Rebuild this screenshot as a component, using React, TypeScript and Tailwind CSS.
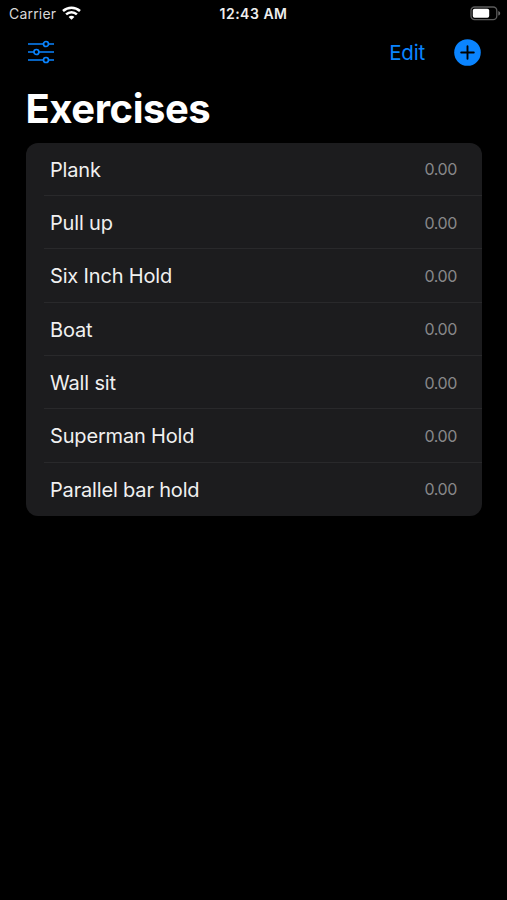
const exercises = [
  { name: 'Plank', value: '0.00' },
  { name: 'Pull up', value: '0.00' },
  { name: 'Six Inch Hold', value: '0.00' },
  { name: 'Boat', value: '0.00' },
  { name: 'Wall sit', value: '0.00' },
  { name: 'Superman Hold', value: '0.00' },
  { name: 'Parallel bar hold', value: '0.00' },
];

function WifiIcon() {
  return (
    <svg className="mb-[2px]" width="19" height="14" viewBox="0 0 19 14" fill="none" stroke="#fff" strokeWidth="2.5">
      <path d="M1 5C5.8 .6 13.2 .6 18 5" />
      <path d="M4.1 8.4C7.2 5.4 11.8 5.4 14.9 8.4" />
      <path d="M9.5 13.8L6.6 10.9C8.2 9.4 10.8 9.4 12.4 10.9Z" fill="#fff" stroke="none" />
    </svg>
  );
}

function BatteryIcon() {
  return (
    <svg width="31" height="15" viewBox="0 0 31 15" fill="none">
      <rect x="1" y="1" width="25.8" height="12.6" rx="3.6" stroke="#5c5c5c" strokeWidth="1.3" />
      <rect x="2.8" y="2.8" width="16.4" height="9" rx="1.8" fill="#fff" />
      <path d="M28.3 5C30.8 5.9 30.8 8.7 28.3 9.6Z" fill="#6c6c6c" />
    </svg>
  );
}

function SlidersIcon() {
  return (
    <svg width="28" height="24" viewBox="0 0 28 24" fill="none" stroke="#0a84ff" strokeWidth="1.7">
      <path d="M1 4H16.4M21.6 4H27M1 12H6.8M12 12H27M1 20H16.4M21.6 20H27" />
      <circle cx="19" cy="4" r="2.5" />
      <circle cx="9.4" cy="12" r="2.5" />
      <circle cx="19" cy="20" r="2.5" />
    </svg>
  );
}

function AddIcon() {
  return (
    <svg width="27" height="27" viewBox="0 0 27 27">
      <circle cx="13.5" cy="13.5" r="13.3" fill="#0a84ff" />
      <path d="M7.2 13.5H19.8M13.5 7.2V19.8" stroke="#000" strokeWidth="1.9" strokeLinecap="round" />
    </svg>
  );
}

export default function App() {
  return (
    <div className="h-[900px] w-[507px] overflow-hidden bg-black font-['Inter','Liberation_Sans',sans-serif] text-white">
      <header className="grid h-7 grid-cols-3 items-center pr-[6px] pl-[9px] text-[14px]">
        <div className="flex items-center gap-[5.5px]">
          <span className="pb-[2px] tracking-[0.2px] text-[#d8d8d8]">Carrier</span>
          <WifiIcon />
        </div>
        <span className="pr-[3px] pb-[2px] text-center font-semibold tracking-[0.5px] whitespace-nowrap text-[#eeeeee]">12:43 AM</span>
        <div className="flex justify-end pb-[2px]">
          <BatteryIcon />
        </div>
      </header>
      <nav className="flex h-12 items-center justify-between pr-[26px] pl-[27px]">
        <button aria-label="Filters">
          <SlidersIcon />
        </button>
        <div className="flex items-center gap-[29px]">
          <button className="pt-[2px] text-[20.5px] tracking-[-0.2px] text-[#0a84ff]">Edit</button>
          <button aria-label="Add exercise">
            <AddIcon />
          </button>
        </div>
      </nav>
      <h1 className="flex h-[66.5px] items-center pl-[25.5px] text-[40px] font-bold tracking-[-0.45px]">Exercises</h1>
      <ul className="mr-[25px] ml-[25.5px] h-[373.5px] rounded-[12px] bg-[#1c1c1e]">
        {exercises.map((exercise) => (
          <li key={exercise.name} className="group h-[53.35px] pl-[18.5px]">
            <div className="flex h-full items-center justify-between border-b border-[#29292b] pt-[2px] pr-[25px] pl-[6px] group-last:border-transparent">
              <span className="text-[20px] tracking-[-0.17px] text-[#f0f0f0]">{exercise.name}</span>
              <span className="pb-px text-[16px] tracking-[-0.4px] text-[#88888a]">{exercise.value}</span>
            </div>
          </li>
        ))}
      </ul>
    </div>
  );
}
